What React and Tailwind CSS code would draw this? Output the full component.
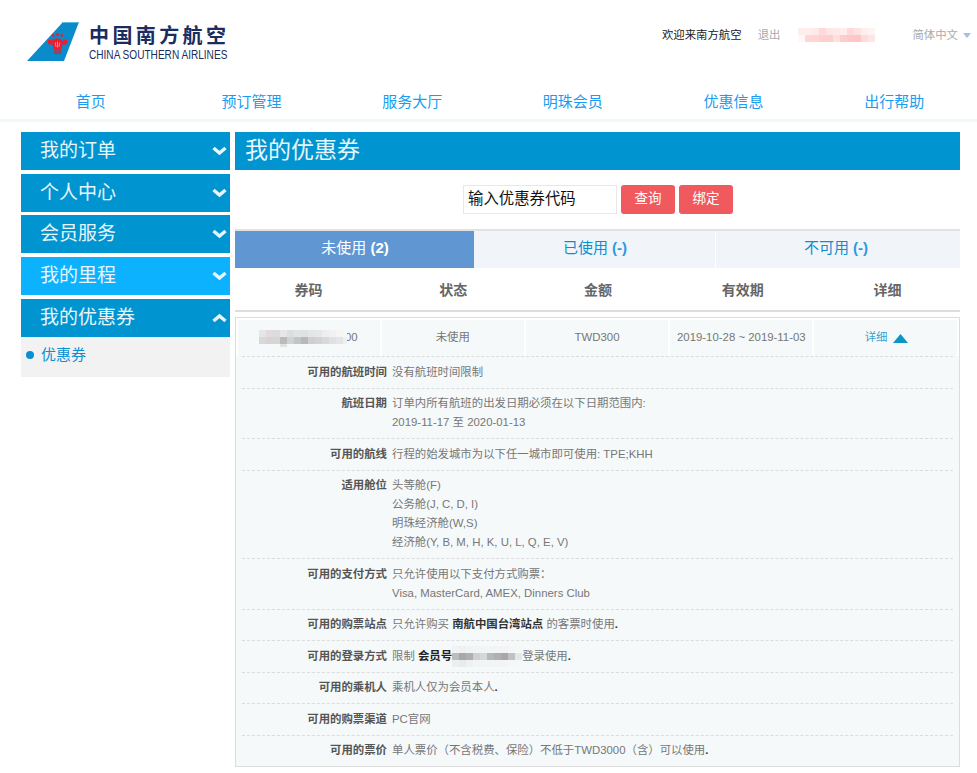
const FONT = "font-['Liberation_Sans','Noto_Sans_CJK_SC',sans-serif]";

function Logo() {
  return (
    <svg width="54" height="40" viewBox="0 0 54 40" className="shrink-0">
      <polygon points="1,40 37,1 53,1 38,40" fill="#0a8ccb" />
      <polygon points="37,1 53,1 52.6,2 36,2" fill="#5cb7e3" />
      <g fill="#ee1c2e">
        <path d="M27 20.5c-1.6-2.2-4.2-2.6-5.2-1-.9 1.6 0 3.8 2 4.2 1.2.2 2.1-.1 2.6-.7.5 2.6 1.1 4.6 1.8 5.8h6.6c.7-1.2 1.3-3.2 1.8-5.8.5.6 1.4.9 2.6.7 2-.4 2.9-2.6 2-4.2-1-1.6-3.6-1.2-5.2 1-.3-1.3-.7-2.3-1.1-3l-1.6 1.2-2.3-2-2.3 2-1.6-1.2c-.4.7-.8 1.7-1.1 3z" />
        <rect x="27.4" y="29.4" width="8.2" height="1.5" />
        <rect x="28" y="31.4" width="7" height="1.6" />
        <circle cx="31.5" cy="13.4" r="1.5" />
        <circle cx="27.2" cy="14.4" r="1.3" />
        <circle cx="35.8" cy="14.4" r="1.3" />
      </g>
      <path d="M31.5 20.5v6M29.3 21.5l.7 4.5M33.7 21.5l-.7 4.5" stroke="#ffb0b8" strokeWidth="0.7" fill="none" />
    </svg>
  );
}

function Chevron({ up }) {
  return (
    <svg width="15" height="10" viewBox="0 0 15 10" className="shrink-0">
      <polyline
        points={up ? "1.5,8 7.5,3 13.5,8" : "1.5,2 7.5,7 13.5,2"}
        fill="none"
        stroke="#e9f6fb"
        strokeWidth="3.4"
      />
    </svg>
  );
}

function Mosaic({ rows, size, className }) {
  return (
    <div className={"flex flex-col " + className}>
      {rows.map((r, i) => (
        <div key={i} className="flex">
          {r.map((c, j) => (
            <div key={j} className="shrink-0" style={{ width: size, height: size, background: c }} />
          ))}
        </div>
      ))}
    </div>
  );
}

const pinkRows = [
  ["#ffeeee","#ffeeee","#ffe8e6","#ffd9d9","#ffe6e6","#ffe8e8","#ffecec","#ffd8da","#ffe2e2","#ffeeee","#fff4f4"],
  ["#fff8f6","#ffd6d6","#ffd6d2","#ffd0cc","#ffcfcf","#ffe0de","#ffcccc","#ffc8c8","#ffc4c4","#ffdcdc","#ffe6e6"],
];
const greyRows = [
  ["#e6e6e6","#e0dcdc","#dcdcdc","#e6e6e6","#dcdfe0","#e2e4e4","#e0e2e2","#e4e6e6","#e6e8e8","#eeeeee","#f0f2f2","#f4f6f6","#f6f8f8"],
  ["#d8d8d8","#d8d4d4","#d6d6d6","#bbbbbb","#cfd3d4","#c4c4c4","#b8b8b8","#cfcfcf","#d2d4d4","#d8dada","#e0e2e2","#e4e6e6","#ecf0f0"],
  ["#f5f9fa","#f5f9fa","#f5f9fa","#e2e2e3","#f5f9fa","#f5f9fa","#f5f9fa","#f5f9fa","#f5f9fa","#f5f9fa","#f5f9fa","#f5f9fa","#f5f9fa"],
];
const memberRows = [
  ["#f0f2f3","#eef1f2","#f0f3f3","#f2f5f6","#f2f5f6","#f2f4f5","#f2f4f5","#f2f4f5","#f4f7f8","#f5f8f9"],
  ["#bcbcbc","#a8a8a8","#b0b0b0","#d0d0d0","#d6d8d8","#b8b8b8","#b0b0b0","#a8a8a8","#c0c2c2","#e4e8e8"],
  ["#eceff0","#e8ebec","#eef1f2","#f2f5f6","#f2f5f6","#f2f4f5","#f2f4f5","#f2f4f5","#f4f7f8","#f5f8f9"],
];

const NAV = ["首页", "预订管理", "服务大厅", "明珠会员", "优惠信息", "出行帮助"];
const SIDE = [
  { t: "我的订单", bg: "bg-[#0095d1]", m: "" },
  { t: "个人中心", bg: "bg-[#0095d1]", m: "mt-[4px]" },
  { t: "会员服务", bg: "bg-[#0095d1]", m: "mt-[3px]" },
  { t: "我的里程", bg: "bg-[#0db2ff]", m: "mt-[4px]" },
  { t: "我的优惠券", bg: "bg-[#0095d1]", m: "mt-[4px]", up: true },
];
const HEAD = ["券码", "状态", "金额", "有效期", "详细"];

function Row({ label, children, last }) {
  return (
    <div className={"flex py-[5.75px] leading-[19px] mx-[6px] " + (last ? "" : "border-b border-dashed border-[#dcdcdc]")}>
      <div className="w-[145px] shrink-0 text-right font-bold text-[#555]">{label}</div>
      <div className="ml-[5px] text-[#777]">{children}</div>
    </div>
  );
}

export default function App() {
  return (
    <div className={"h-[773px] overflow-hidden bg-white " + FONT}>
      <header className="h-[82px] flex items-start">
        <div className="ml-[26px] mt-[21px]"><Logo /></div>
        <div className="ml-[9px] mt-[23px] w-[146px]">
          <div className="text-[20px] leading-[26px] font-bold tracking-[3.4px] text-[#1b2c5e] whitespace-nowrap">中国南方航空</div>
          <div className="text-[12px] leading-[12px] origin-left scale-x-[0.84] text-[#1b2c5e] whitespace-nowrap">CHINA SOUTHERN AIRLINES</div>
        </div>
        <div className="ml-auto mr-[6px] mt-[28px] flex items-center h-[14px] text-[11.4px] whitespace-nowrap">
          <span className="text-[#222] mt-[2px]">欢迎来南方航空</span>
          <span className="ml-[16px] text-[#aaa] mt-[2px]">退出</span>
          <Mosaic rows={pinkRows} size="7px" className="ml-[18px]" />
          <span className="ml-[37px] text-[#aaa] mt-[2px]">简体中文</span>
          <svg width="8" height="5" viewBox="0 0 8 5" className="ml-[5px]"><polygon points="0,0 8,0 4,5" fill="#a9bde8" /></svg>
        </div>
      </header>

      <nav className="grid grid-cols-6 w-[964px] ml-[10.5px] h-[37px] items-center pt-[4px] text-[15px] text-[#1a9cf0] text-center">
        {NAV.map((n) => <div key={n}>{n}</div>)}
      </nav>
      <div className="h-[3px] bg-[#f0f8fb]" />

      <div className="flex mt-[10px] ml-[21px] items-start">
        <aside className="w-[209px] shrink-0">
          {SIDE.map((s) => (
            <div key={s.t} className={"h-[38px] flex items-center justify-between pl-[19px] pr-[3px] text-[19px] text-[#e8f6fb] " + s.bg + " " + s.m}>
              <span>{s.t}</span>
              <Chevron up={s.up} />
            </div>
          ))}
          <div className="h-[40px] bg-[#f2f2f2] flex items-center pl-[5px] text-[15px] text-[#0a8fd0] pb-[4px]">
            <span className="w-[8px] h-[8px] rounded-full bg-[#0a8fd0]" />
            <span className="ml-[7px]">优惠券</span>
          </div>
        </aside>

        <main className="w-[725px] ml-[5px] shrink-0">
          <div className="h-[38px] bg-[#0095d1] flex items-center pl-[10px] pb-[2px] text-[23px] text-[#e8f6fb]">我的优惠券</div>

          <div className="flex justify-center mt-[15px] h-[29px] pl-[1px]">
            <div className="w-[154px] border border-[#e8e8e8] flex items-center pl-[4px] pb-[2px] text-[15.4px] text-[#111]">输入优惠券代码</div>
            <button className="ml-[4px] w-[54px] rounded-[3px] bg-[#f05a5e] text-white text-[13.5px] pb-[1px]">查询</button>
            <button className="ml-[4px] w-[54px] rounded-[3px] bg-[#f05a5e] text-white text-[13.5px] pb-[1px]">绑定</button>
          </div>

          <div className="mt-[15px] border-t-[2px] border-[#e2e2e2] flex h-[39px] text-[15px]">
            <div className="w-[239px] bg-[#6097d3] text-white flex items-center justify-center whitespace-pre pb-[3px] pl-[1px]">未使用 <b>(2)</b></div>
            <div className="w-[241px] bg-[#f1f5f9] text-[#0a8fd0] flex items-center justify-center whitespace-pre pb-[3px] pl-[1px]">已使用 <b className="text-[#2a9be0]">(-)</b></div>
            <div className="w-[244px] ml-[1px] bg-[#f1f5f9] text-[#0a8fd0] flex items-center justify-center whitespace-pre pb-[3px] pr-[4px]">不可用 <b className="text-[#2a9be0]">(-)</b></div>
          </div>

          <div className="grid grid-cols-5 h-[44px] items-center border-b-[2px] border-[#dddddd] text-[14px] font-bold text-[#666] text-center pt-[3px] pl-[1px]">
            {HEAD.map((h) => <div key={h}>{h}</div>)}
          </div>

          <div className="mt-[5px] border border-[#dddddd] bg-[#f5f9fa] text-[11.4px]">
            <div className="flex gap-[2px] p-[2px] pb-0 bg-white text-[#777] text-center">
              <div className="w-[142px] h-[36px] bg-[#f5f9fa] flex items-center pl-[21px]">
                <Mosaic rows={greyRows} size="7px" className="w-[88px] h-[17px] overflow-hidden relative z-10" />
                <span className="ml-[-2px]">00</span>
              </div>
              <div className="w-[142px] h-[36px] bg-[#f5f9fa] flex items-center justify-center">未使用</div>
              <div className="w-[143px] h-[36px] bg-[#f5f9fa] flex items-center justify-center">TWD300</div>
              <div className="w-[142px] h-[36px] bg-[#f5f9fa] flex items-center justify-center">2019-10-28 ~ 2019-11-03</div>
              <div className="w-[143px] h-[36px] bg-[#f5f9fa] flex items-center justify-center text-[#3a9fd0] pl-[1px]">
                详细
                <svg width="15" height="9" viewBox="0 0 15 9" className="ml-[5px]"><polygon points="7.5,0 15,9 0,9" fill="#0b96c8" /></svg>
              </div>
            </div>
            <div className="border-b border-dashed border-[#dcdcdc] mx-[6px]" />

            <Row label="可用的航班时间">没有航班时间限制</Row>
            <Row label="航班日期">
              <div>订单内所有航班的出发日期必须在以下日期范围内:</div>
              <div>2019-11-17 至 2020-01-13</div>
            </Row>
            <Row label="可用的航线">行程的始发城市为以下任一城市即可使用: TPE;KHH</Row>
            <Row label="适用舱位">
              <div>头等舱(F)</div>
              <div>公务舱(J, C, D, I)</div>
              <div>明珠经济舱(W,S)</div>
              <div>经济舱(Y, B, M, H, K, U, L, Q, E, V)</div>
            </Row>
            <Row label="可用的支付方式">
              <div>只允许使用以下支付方式购票：</div>
              <div>Visa, MasterCard, AMEX, Dinners Club</div>
            </Row>
            <Row label="可用的购票站点">
              只允许购买 <b className="text-[#333]">南航中国台湾站点</b> 的客票时使用<b className="text-[#333]">.</b>
            </Row>
            <Row label="可用的登录方式">
              <div className="flex items-center h-[19px]">
                限制&nbsp;<b className="text-[#222]">会员号</b>
                <Mosaic rows={memberRows} size="7px" />
                <span>登录使用</span><b className="text-[#333]">.</b>
              </div>
            </Row>
            <Row label="可用的乘机人">乘机人仅为会员本人<b className="text-[#333]">.</b></Row>
            <Row label="可用的购票渠道">PC官网</Row>
            <Row label="可用的票价" last>单人票价（不含税费、保险）不低于TWD3000（含）可以使用<b className="text-[#333]">.</b></Row>
          </div>
        </main>
      </div>
    </div>
  );
}
